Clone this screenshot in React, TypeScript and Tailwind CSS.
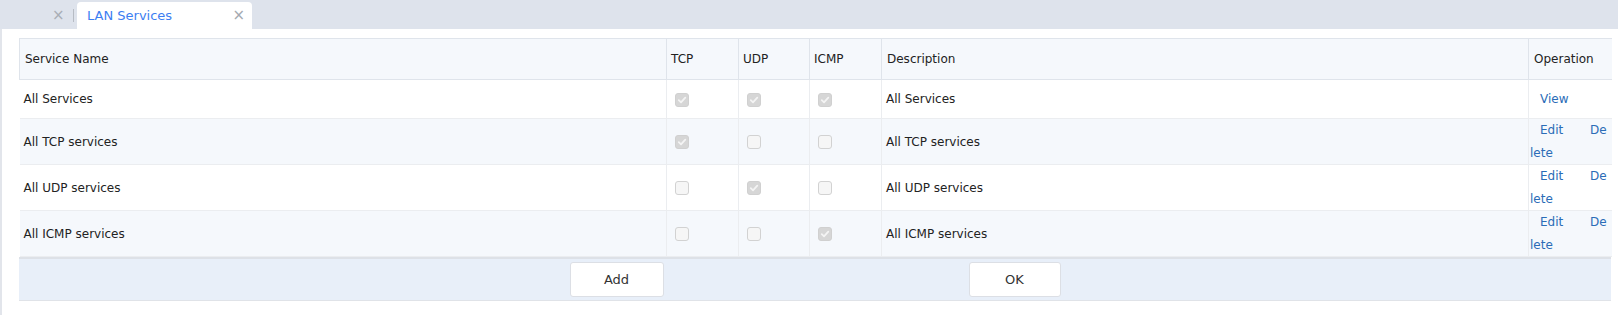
import React from "react";

const font = { fontFamily: '"DejaVu Sans", Verdana, sans-serif' };

function Check({ checked }: { checked: boolean }) {
  return checked ? (
    <span className="inline-flex h-[14px] w-[14px] items-center justify-center rounded-[3px] border border-[#d0d0d0] bg-[#d6d6d6] align-middle">
      <svg width="10" height="10" viewBox="0 0 10 10">
        <path d="M1.8 5.2 L4 7.3 L8.3 2.6" fill="none" stroke="#f4f4f4" strokeWidth="1.8" strokeLinecap="round" strokeLinejoin="round" />
      </svg>
    </span>
  ) : (
    <span className="inline-block h-[14px] w-[14px] rounded-[3px] border border-[#d2d2d2] bg-[#f6f6f6] align-middle" />
  );
}

type Row = { name: string; tcp: boolean; udp: boolean; icmp: boolean; view?: boolean; h: string; bg: string };

const rows: Row[] = [
  { name: "All Services", tcp: true, udp: true, icmp: true, view: true, h: "h-[39px]", bg: "bg-white" },
  { name: "All TCP services", tcp: true, udp: false, icmp: false, h: "h-[45px]", bg: "bg-[#f5f8fc]" },
  { name: "All UDP services", tcp: false, udp: true, icmp: false, h: "h-[45px]", bg: "bg-white" },
  { name: "All ICMP services", tcp: false, udp: false, icmp: true, h: "h-[45px]", bg: "bg-[#f5f8fc]" },
];

export default function App() {
  return (
    <div className="h-[315px] w-[1618px] overflow-hidden bg-white text-[12px] text-[#222]" style={font}>
      {/* Tab bar */}
      <div className="flex h-[29px] items-end bg-[#dee3ec]">
        <div className="flex h-[27px] w-[77px] items-center">
          <span className="ml-[52px] text-[15px] leading-none text-[#a9aeb6]">×</span>
          <span className="ml-[8px] h-[13px] w-[1px] bg-[#b7bcc4]" />
        </div>
        <div className="flex h-[27px] w-[175px] items-center justify-between rounded-t-[4px] bg-white pl-[10px] pr-[7px]">
          <span className="text-[13px] text-[#3d7ef2]">LAN Services</span>
          <span className="text-[15px] leading-none text-[#a4a9b1]">×</span>
        </div>
      </div>

      {/* Content */}
      <div className="h-[286px] border-l-2 border-[#e2e5eb] pl-[17px] pt-[9px]">
        <div className="w-[1592px]">
          <table className="w-[1592px] table-fixed border-collapse">
            <colgroup>
              <col className="w-[647px]" />
              <col className="w-[72px]" />
              <col className="w-[71px]" />
              <col className="w-[72px]" />
              <col className="w-[647px]" />
              <col className="w-[83px]" />
            </colgroup>
            <thead>
              <tr className="h-[41px] bg-[#f5f8fc] text-left">
                <th className="border-l border-t border-b border-[#dfe4eb] pl-[5px] font-normal">Service Name</th>
                <th className="border border-[#dfe4eb] pl-[4px] font-normal">TCP</th>
                <th className="border border-[#dfe4eb] pl-[4px] font-normal">UDP</th>
                <th className="border border-[#dfe4eb] pl-[4px] font-normal">ICMP</th>
                <th className="border border-[#dfe4eb] pl-[5px] font-normal">Description</th>
                <th className="border-t border-b border-l border-[#dfe4eb] pl-[5px] font-normal">Operation</th>
              </tr>
            </thead>
            <tbody>
              {rows.map((r) => (
                <tr key={r.name} className={`${r.h} ${r.bg}`}>
                  <td className="border-b border-[#ebedf0] pl-[4px]">{r.name}</td>
                  <td className="border border-t-0 border-[#ebedf0] pl-[8px]"><Check checked={r.tcp} /></td>
                  <td className="border border-t-0 border-[#ebedf0] pl-[8px]"><Check checked={r.udp} /></td>
                  <td className="border border-t-0 border-[#ebedf0] pl-[8px]"><Check checked={r.icmp} /></td>
                  <td className="border border-t-0 border-[#ebedf0] pl-[4px]">{r.name}</td>
                  <td className="border-b border-[#ebedf0] pl-[1px] text-[#2a6cb7]">
                    {r.view ? (
                      <span className="pl-[10px]">View</span>
                    ) : (
                      <div className="leading-[22.5px]">
                        <div className="flex">
                          <span className="w-[60px] pl-[10px]">Edit</span>
                          <span>De</span>
                        </div>
                        <div>lete</div>
                      </div>
                    )}
                  </td>
                </tr>
              ))}
            </tbody>
          </table>
          <div className="flex h-[44px] items-center justify-center gap-[305px] border-t-2 border-b border-t-[#dde1e7] border-b-[#e0e3e8] bg-[#e8eff9]">
            <button className="h-[35px] w-[94px] rounded-[3px] border border-[#dcdfe5] bg-white text-[13px] text-[#333]">Add</button>
            <button className="h-[35px] w-[92px] rounded-[3px] border border-[#dcdfe5] bg-white text-[13px] text-[#333]">OK</button>
          </div>
        </div>
      </div>
    </div>
  );
}
